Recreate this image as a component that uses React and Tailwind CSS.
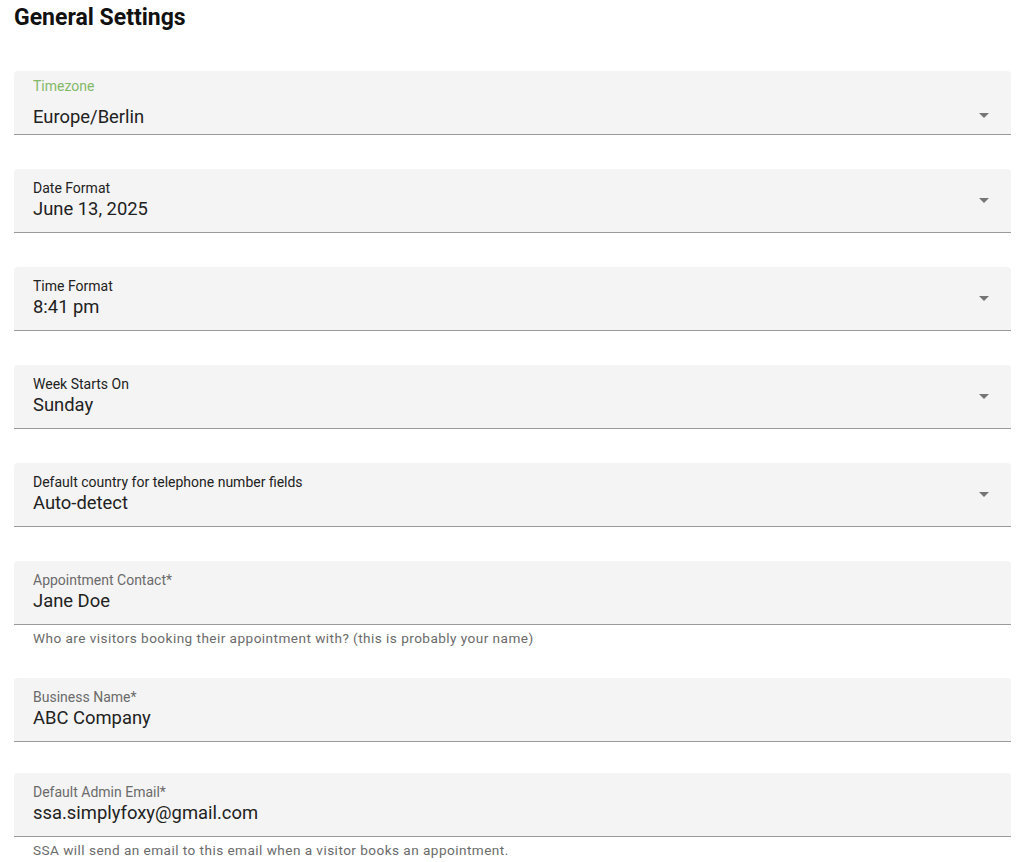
function CaretDown() {
  return (
    <svg width="10" height="5" viewBox="0 0 10 5" className="shrink-0">
      <path d="M0 0 L10 0 L5 5 Z" fill="#757575" />
    </svg>
  );
}

function SelectField({ label, value, focused = false, className = "" }) {
  return (
    <div
      className={`flex h-[64px] items-stretch rounded-t-[4px] border-b border-[#9a9a9a] bg-[#f4f4f4] pl-[19px] pr-[22px] ${className}`}
    >
      <div className={`flex-1 ${focused ? "pt-[7px]" : "pt-[11px]"}`}>
        <div
          className={`text-[14px] leading-[16px] ${
            focused ? "text-[#83b96a]" : "text-[#222]"
          }`}
        >
          {label}
        </div>
        <div
          className={`text-[18.4px] leading-[24px] text-[#222] ${
            focused ? "mt-[11px]" : "mt-[1px]"
          }`}
        >
          {value}
        </div>
      </div>
      <div
        className={`flex items-center ${focused ? "pb-[3px] pt-[29px]" : ""}`}
      >
        <CaretDown />
      </div>
    </div>
  );
}

function TextField({ label, value, helper, className = "" }) {
  return (
    <div className={className}>
      <div className="h-[64px] rounded-t-[4px] border-b border-[#9a9a9a] bg-[#f4f4f4] pl-[19px] pr-[22px] pt-[11px]">
        <div className="text-[14px] leading-[16px] text-[#6b6b6b]">{label}</div>
        <div className="mt-[1px] text-[18.4px] leading-[24px] text-[#222]">
          {value}
        </div>
      </div>
      {helper && (
        <div className="mt-[5px] pl-[19px] text-[13.6px] leading-[16px] tracking-[0.45px] text-[#6b6b6b]">
          {helper}
        </div>
      )}
    </div>
  );
}

export default function App() {
  return (
    <div
      className="min-h-[862px] bg-white pl-[14px] pr-[13px]"
      style={{ fontFamily: "Roboto, 'Liberation Sans', sans-serif" }}
    >
      <h2 className="pt-[4px] text-[23px] font-bold leading-[28px] text-[#111]">
        General Settings
      </h2>

      <SelectField
        className="mt-[39px]"
        label="Timezone"
        value="Europe/Berlin"
        focused
      />
      <SelectField className="mt-[34px]" label="Date Format" value="June 13, 2025" />
      <SelectField className="mt-[34px]" label="Time Format" value="8:41 pm" />
      <SelectField className="mt-[34px]" label="Week Starts On" value="Sunday" />
      <SelectField
        className="mt-[34px]"
        label="Default country for telephone number fields"
        value="Auto-detect"
      />

      <TextField
        className="mt-[34px]"
        label="Appointment Contact*"
        value="Jane Doe"
        helper="Who are visitors booking their appointment with? (this is probably your name)"
      />
      <TextField className="mt-[32px]" label="Business Name*" value="ABC Company" />
      <TextField
        className="mt-[31px]"
        label="Default Admin Email*"
        value="ssa.simplyfoxy@gmail.com"
        helper="SSA will send an email to this email when a visitor books an appointment."
      />
    </div>
  );
}
